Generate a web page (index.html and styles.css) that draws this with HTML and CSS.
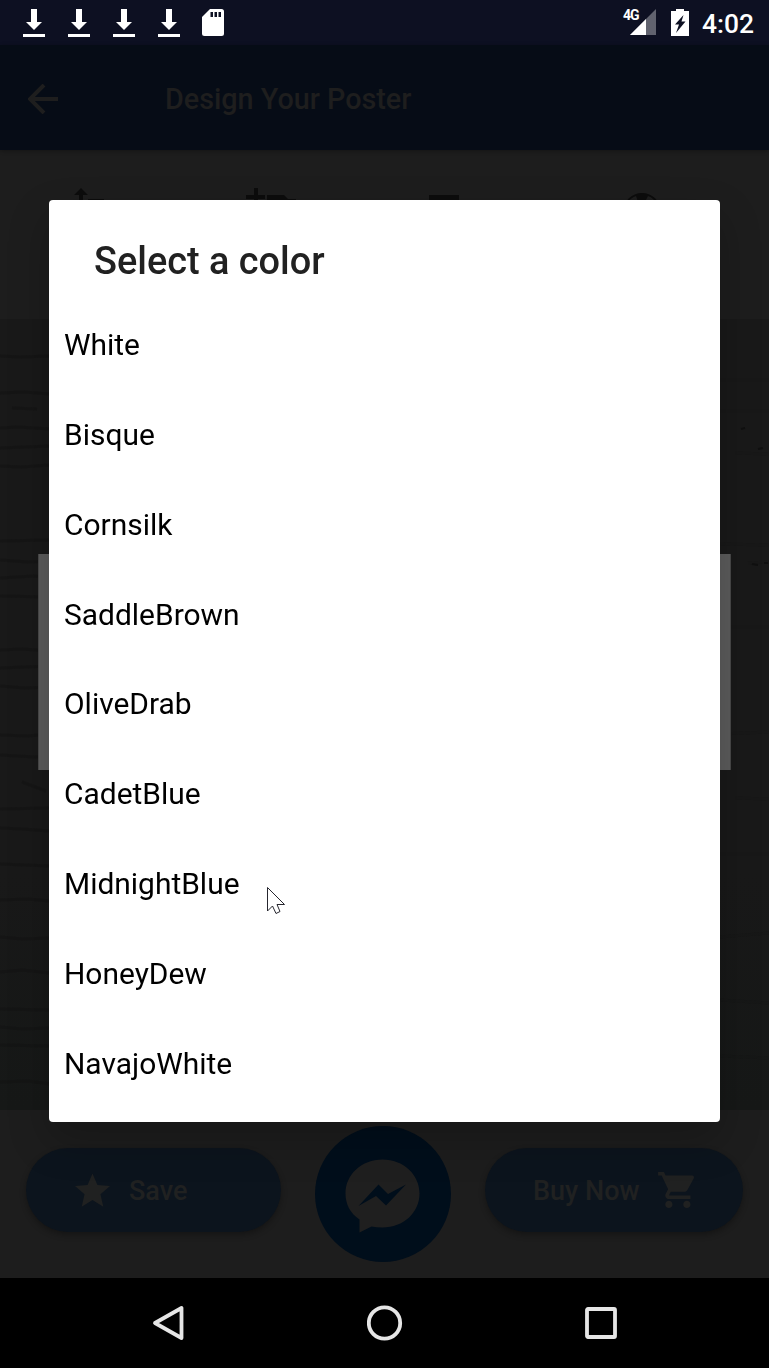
FILE: index.html
```html
<!DOCTYPE html>
<html lang="en">
<head>
<meta charset="utf-8">
<title>Design Your Poster</title>
<link rel="stylesheet" href="styles.css">
</head>
<body>
<div class="phone">
  <header class="status">
    <div class="notifications">
      <svg class="download" viewBox="0 0 22 28"><path d="M8 0h6v13h5l-8 8-8-8h5zM0 25h22v3H0z"/></svg>
      <svg class="download" viewBox="0 0 22 28"><path d="M8 0h6v13h5l-8 8-8-8h5zM0 25h22v3H0z"/></svg>
      <svg class="download" viewBox="0 0 22 28"><path d="M8 0h6v13h5l-8 8-8-8h5zM0 25h22v3H0z"/></svg>
      <svg class="download" viewBox="0 0 22 28"><path d="M8 0h6v13h5l-8 8-8-8h5zM0 25h22v3H0z"/></svg>
      <svg class="sdcard" viewBox="0 0 22 27"><path fill-rule="evenodd" d="M8 0h11.500q2.500 0 2.500 2.500v22q0 2.500-2.500 2.500h-17Q0 27 0 24.500V8zM8.500 3v5h2.500V3zM12.500 3v5h2.500V3zM16.500 3v5h2.500V3z"/></svg>
    </div>
    <div class="system">
      <span class="network">4G</span>
      <svg class="signal" viewBox="0 0 26 26"><path opacity=".35" d="M26 0v26H0z"/><path d="M16 10v16H0z"/></svg>
      <svg class="battery" viewBox="0 0 18 27"><path fill-rule="evenodd" d="M5 0h8v2h5v25H0V2h5zM12.500 6L4 15.500h4L5 24 14.500 12.500h-4z"/></svg>
      <span class="clock">4:02</span>
    </div>
  </header>
  <div class="appbar">
    <svg class="back" viewBox="0 0 30 30"><path d="M30 15H3M16 1L2 15l14 14"/></svg>
    <h1 class="appbar-title">Design Your Poster</h1>
  </div>
  <div class="tools">
    <svg class="tool" viewBox="0 0 44 44"><path d="M16 0l7 7h-5v14h-4V7H9zM23 11h16v24H23z"/></svg>
    <svg class="tool" viewBox="0 0 44 44"><path d="M8 0h4v7h7v4h-7v8H8v-8H0V7h8zM21 7h17l4 4h8v26H5V23h16z"/></svg>
    <svg class="tool" viewBox="0 0 44 44"><path d="M0 7h30v6H18v26h-6V13H0z"/></svg>
    <svg class="tool" viewBox="0 0 44 44"><path fill-rule="evenodd" d="M22 5a19 19 0 1 1 0 38 19 19 0 0 1 0-38zM16 8q-6 2-9 8l12 1zM28 8l-4 8 13 1q-3-7-9-9z"/></svg>
  </div>
  <main class="canvas">
    <svg class="bricks" viewBox="0 0 769 791" preserveAspectRatio="none">
      <g class="mortar">
        <path d="M0 37l20 1 30-1M0 74l24-1 26 2M12 89l25 1M0 109l18-1 32 2M0 129l50-2M0 147l21 1 29-2M0 222l50-1M0 241l28 2 22-1M0 259l34-2 16 2M0 277l50 1M0 331l22-1 28 2M0 349l50-2M0 367l25 2 25-1M0 416l28 1 22-2M0 436l35 2 15-1M0 490l50-1M0 509l22 1 28 2M22 463l24 9M0 545l50 2M0 581l28-1 22 2M0 618l22 2 28-1M0 653l22-2 28 3M0 690l50 1M0 708l22 2 28-1M0 726l50 1M0 763l28-1 22 3"/>
        <path d="M720 61h49M720 92h49M735 134l34 1M720 225l49 1M748 244l21-1M720 308h49M720 415l49-2M735 479l34 1M720 535h49M720 618l49-4M720 681l49 3M720 737l49 2"/>
      </g>
      <path class="specks" d="M741 110l4-1M758 130l5-1M752 245l6 1M764 244h4"/>
    </svg>
    <div class="poster"></div>
  </main>
  <footer class="actions">
    <div class="action save">
      <svg class="star" viewBox="2 2 20 19"><path d="M12 17.270L18.180 21l-1.640-7.030L22 9.240l-7.190-.61L12 2 9.190 8.630 2 9.240l5.460 4.730L5.820 21z"/></svg>
      <span>Save</span>
    </div>
    <svg class="messenger" viewBox="0 0 136 136"><circle class="disc" cx="68" cy="68" r="68"/><path class="bubble" d="M67.500 33.500c21 0 37 15 37 34s-16 34-37 34q-6 0-11-1l-12 6V93.500C35.500 87.500 30.500 78.500 30.500 67.500c0-19 16-34 37-34z"/><path class="disc" d="M43.500 80l20-21.500 9.500 9.500 18-9.500-20 21-10-9.500z"/></svg>
    <div class="action buy">
      <span>Buy Now</span>
      <svg class="cart" viewBox="1 2 20.500 20"><path d="M7 18c-1.100 0-1.990.9-1.990 2S5.900 22 7 22s2-.9 2-2-.9-2-2-2zM1 2v2h2l3.600 7.590-1.350 2.450C4.520 15.370 5.480 17 7 17h12v-2H7.420c-.14 0-.25-.11-.25-.25l.03-.12.9-1.630h7.450c.75 0 1.410-.41 1.750-1.030l3.580-6.490C21.250 4.820 20.760 4 20 4H5.210l-.94-2zM17 18c-1.100 0-1.990.9-1.990 2s.89 2 1.990 2 2-.9 2-2-.9-2-2-2z"/></svg>
    </div>
  </footer>
  <nav class="navbar">
    <svg class="navicon" viewBox="0 0 36 36"><path d="M31.500 3v30L5 18z"/></svg>
    <svg class="navicon" viewBox="0 0 36 36"><circle cx="17.500" cy="18" r="15.700"/></svg>
    <svg class="navicon" viewBox="0 0 36 36"><rect x="4" y="4" width="28" height="28" rx="1"/></svg>
  </nav>

  <section class="dialog">
    <h2 class="dialog-title">Select a color</h2>
    <ul class="colors">
      <li>White</li>
      <li>Bisque</li>
      <li>Cornsilk</li>
      <li>SaddleBrown</li>
      <li>OliveDrab</li>
      <li>CadetBlue</li>
      <li>MidnightBlue</li>
      <li>HoneyDew</li>
      <li>NavajoWhite</li>
    </ul>
  </section>
  <svg class="cursor" viewBox="0 0 20 28"><path d="M1.500 1.500v23.500l5-5 3.500 7.500 4-2-3-7h7.500z"/></svg>
</div>
</body>
</html>
```
FILE: styles.css
```css
* { box-sizing: border-box; }
body { margin: 0; background: #000; font-family: Roboto, sans-serif; }
h1, h2, ul { margin: 0; padding: 0; }
svg { display: block; flex: none; }

.phone { position: relative; display: flex; flex-direction: column; width: 769px; height: 1368px; overflow: hidden; }

.status { display: flex; justify-content: space-between; height: 45px; padding: 0 15px 0 23px; background: #0d1022; color: #fff; fill: #fff; }
.notifications { display: flex; gap: 23px; padding-top: 9px; }
.download { width: 22px; height: 28px; }
.sdcard { width: 22px; height: 27px; margin-left: -1px; }
.system { display: flex; align-items: flex-start; }
.network { margin-top: 7px; font-size: 14px; line-height: 17px; font-weight: 700; width: 17px; margin-right: -10px; letter-spacing: -1px; }
.signal { width: 26px; height: 26px; margin-top: 9px; }
.battery { width: 18px; height: 27px; margin: 9px 13px 0 15px; }
.clock { font-size: 26.400px; line-height: 48px; font-weight: 500; }

.appbar { position: relative; z-index: 1; display: flex; align-items: center; gap: 107px; height: 105px; padding: 3px 28px 0; background: #060c16; box-shadow: 0 1px 4px rgba(0, 0, 0, .3); }
.back { width: 30px; height: 30px; fill: none; stroke: #1e1e1e; stroke-width: 4; }
.appbar-title { color: #1e1e1e; font-size: 28.750px; line-height: 34px; font-weight: 500; }

.tools { display: flex; gap: 138px; height: 169px; padding: 38px 0 0 65px; background: #1d1d1d; fill: #0c0c0c; }
.tool { width: 44px; height: 44px; overflow: visible; }
.tool:nth-child(2) { margin-left: -1px; }
.tool:nth-child(3) { margin-left: 1px; }
.tool:nth-child(4) { margin-left: 9px; }

.canvas { position: relative; display: grid; height: 791px; background: linear-gradient(#191919, #191919 70%, #161817); }
.bricks { grid-area: 1 / 1; width: 769px; height: 791px; }
.mortar { fill: none; stroke: #131313; stroke-width: 3; opacity: .45; }
.mortar path:nth-child(2) { opacity: .35; }
.specks { stroke: #101010; stroke-width: 2; }
.poster { grid-area: 1 / 1; width: 693px; height: 216px; margin: 235px 0 0 38px; background: #5c5c5c; border: 1px solid #484848; border-width: 0 1px; }

.actions { display: flex; align-items: flex-start; gap: 34px; height: 168px; padding: 0 26px; background: #1d1d1d; }
.action { display: flex; align-items: center; height: 84px; margin-top: 38px; border-radius: 42px; background: #0c141d; color: #202121; fill: #202121; font-size: 27px; font-weight: 500; box-shadow: 0 3px 6px rgba(0, 0, 0, .3); }
.action span { padding-top: 2px; }
.save { width: 255px; padding-left: 49px; gap: 19px; }
.star { width: 35px; height: 34px; }
.messenger { width: 136px; height: 136px; margin-top: 16px; }
.disc { fill: #000e1b; }
.bubble { fill: #1f1f1f; }
.buy { width: 258px; padding-left: 48px; gap: 18px; }
.cart { width: 37px; height: 36px; }

.navbar { display: flex; justify-content: space-between; height: 90px; padding: 27px 150px 0; background: #000; }
.navicon { width: 36px; height: 36px; fill: none; stroke: #e6e6e6; stroke-width: 3.800; stroke-linejoin: round; }

.dialog { position: absolute; z-index: 2; left: 49px; top: 200px; width: 671px; height: 922px; padding-top: 38px; border-radius: 4px; background: #fff; box-shadow: 0 18px 42px rgba(0, 0, 0, .22); }
.dialog-title { height: 62.400px; padding-left: 45px; color: #212121; font-size: 37.900px; line-height: 46px; font-weight: 500; }
.colors { display: grid; grid-auto-rows: 89.770px; list-style: none; padding-left: 15px; color: #000; font-size: 29.950px; line-height: 90px; }
.cursor { position: absolute; z-index: 3; left: 266px; top: 886px; width: 20px; height: 28px; fill: #fff; stroke: #26262e; stroke-width: 1; }
```
